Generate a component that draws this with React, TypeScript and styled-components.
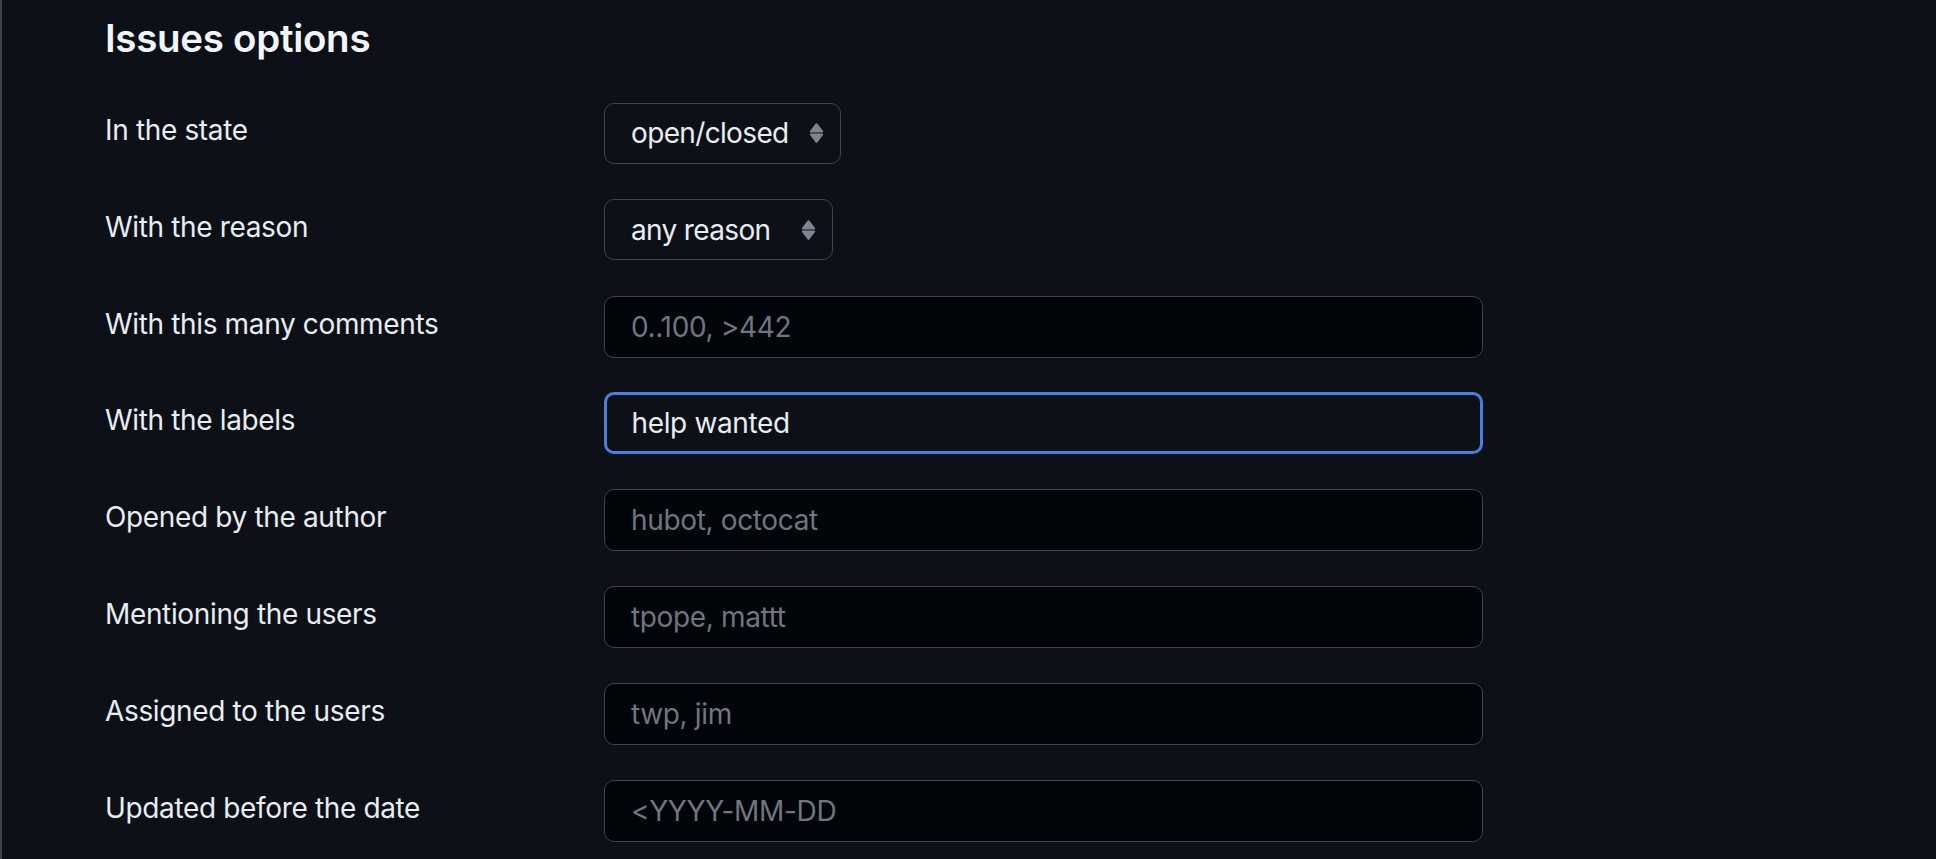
import React from "react";
import styled, { createGlobalStyle } from "styled-components";

const Global = createGlobalStyle`
  html, body { margin: 0; padding: 0; background: #0d1117; }
  body { font-family: Inter, "Noto Sans", sans-serif; color: #e6edf3; }
  * { box-sizing: border-box; }
`;

const Page = styled.div`
  min-height: 859px;
  border-left: 2px solid #3d444d;
  padding: 14px 0 0 103px;
  background: #0d1117;
`;

const Heading = styled.h2`
  margin: 0;
  font-size: 38.5px;
  line-height: 48px;
  font-weight: 600;
  color: #f0f6fc;
  letter-spacing: -0.3px;
`;

const Form = styled.div`
  display: grid;
  grid-template-columns: 499px 879px;
  row-gap: 34.8px;
  margin-top: 40px;
`;

const Label = styled.label`
  font-size: 28px;
  line-height: 42px;
  padding-top: 7px;
  letter-spacing: -0.35px;
  color: #e6edf3;
`;

const Field = styled.div`
  display: flex;
  align-items: center;
  height: 62px;
`;

const SelectBox = styled.div`
  display: inline-flex;
  align-items: center;
  height: 61px;
  padding: 0 16px 0 26px;
  gap: 20px;
  border: 1.5px solid #3d444d;
  border-radius: 10px;
  background: #0d1117;
  font-size: 28px;
  letter-spacing: -0.65px;
  color: #e6edf3;
`;

const SelectValue = styled.span<{ $minWidth?: number }>`
  min-width: ${(p) => (p.$minWidth ? `${p.$minWidth}px` : "0")};
  white-space: nowrap;
`;

const Input = styled.input<{ $focused?: boolean }>`
  width: 100%;
  height: 62px;
  padding: 0 26px;
  border-radius: 10px;
  font-family: Inter, "Noto Sans", sans-serif;
  font-size: 28px;
  letter-spacing: -0.35px;
  color: #e6edf3;
  outline: none;
  background: ${(p) => (p.$focused ? "#0d1117" : "#010409")};
  border: ${(p) => (p.$focused ? "3px solid #4a7fe2" : "1.5px solid #3d444d")};
  padding-left: ${(p) => (p.$focused ? "24.5px" : "26px")};
  &::placeholder { color: #6e7681; }
`;

const Arrows = () => (
  <svg width="15" height="20" viewBox="0 0 15 20" aria-hidden="true">
    <path d="M6.5 0.8 Q7.5 -0.3 8.5 0.8 L14 8 Q14.6 9.4 13.2 9.4 L1.8 9.4 Q0.4 9.4 1 8 Z" fill="#7d8590" />
    <path d="M6.5 19.2 Q7.5 20.3 8.5 19.2 L14 12 Q14.6 10.6 13.2 10.6 L1.8 10.6 Q0.4 10.6 1 12 Z" fill="#7d8590" />
  </svg>
);

type Row =
  | { label: string; kind: "select"; value: string; minWidth?: number }
  | { label: string; kind: "input"; placeholder?: string; value?: string; focused?: boolean };

const rows: Row[] = [
  { label: "In the state", kind: "select", value: "open/closed" },
  { label: "With the reason", kind: "select", value: "any reason", minWidth: 150 },
  { label: "With this many comments", kind: "input", placeholder: "0..100, >442" },
  { label: "With the labels", kind: "input", value: "help wanted", focused: true },
  { label: "Opened by the author", kind: "input", placeholder: "hubot, octocat" },
  { label: "Mentioning the users", kind: "input", placeholder: "tpope, mattt" },
  { label: "Assigned to the users", kind: "input", placeholder: "twp, jim" },
  { label: "Updated before the date", kind: "input", placeholder: "<YYYY-MM-DD" },
];

export default function App() {
  return (
    <>
      <Global />
      <Page>
        <Heading>Issues options</Heading>
        <Form>
          {rows.map((r) => (
            <React.Fragment key={r.label}>
              <Label>{r.label}</Label>
              <Field>
                {r.kind === "select" ? (
                  <SelectBox>
                    <SelectValue $minWidth={r.minWidth}>{r.value}</SelectValue>
                    <Arrows />
                  </SelectBox>
                ) : (
                  <Input
                    $focused={r.focused}
                    placeholder={r.placeholder}
                    defaultValue={r.value}
                  />
                )}
              </Field>
            </React.Fragment>
          ))}
        </Form>
      </Page>
    </>
  );
}
